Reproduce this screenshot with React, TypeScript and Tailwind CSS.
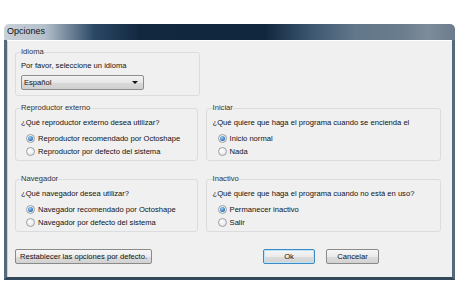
function Radio({ checked }: { checked?: boolean }) {
  return (
    <span className="flex h-[9px] w-[9px] items-center justify-center rounded-full border border-[#9aa0a6] bg-[radial-gradient(circle_at_40%_35%,#ffffff,#dcdfe3)]">
      {checked && (
        <span className="h-[5px] w-[5px] rounded-full bg-[radial-gradient(circle_at_40%_35%,#9fd0f5,#2a6db5_70%)]" />
      )}
    </span>
  );
}

function Option({ label, checked }: { label: string; checked?: boolean }) {
  return (
    <div className="flex h-[13px] items-center gap-[3px] pl-[5px]">
      <Radio checked={checked} />
      <span>{label}</span>
    </div>
  );
}

function Group({
  title,
  question,
  options,
  className,
}: {
  title: string;
  question: string;
  options: string[];
  className?: string;
}) {
  return (
    <fieldset
      className={
        "rounded-[3px] border border-[#dadde0] px-[5px] pb-[2px] " + (className ?? "")
      }
    >
      <legend className="px-0 leading-[10px] text-[#333]">{title}</legend>
      <div className="mt-[5px] h-[10px] leading-[10px]">{question}</div>
      <div className="mt-[4px] flex flex-col">
        {options.map((o, i) => (
          <Option key={o} label={o} checked={i === 0} />
        ))}
      </div>
    </fieldset>
  );
}

function Button({ children, primary, className }: { children: string; primary?: boolean; className?: string }) {
  return (
    <button
      className={
        "flex h-[15px] items-center justify-center rounded-[2px] border bg-[linear-gradient(180deg,#f6f6f6_0%,#ebebeb_50%,#dddddd_51%,#d2d2d2_100%)] leading-none text-[#111] " +
        (primary ? "border-[#3c8ac4] shadow-[inset_0_0_0_1px_#bfe3fa] " : "border-[#8a8a8a] ") +
        (className ?? "")
      }
    >
      {children}
    </button>
  );
}

export default function App() {
  return (
    <div className="h-[306px] w-[460px] bg-white pl-[4px] pt-[24px] font-['Liberation_Sans',Arial,sans-serif] text-[7.6px] text-[#111]">
      <div className="flex w-[451px] flex-col">
        <div className="flex h-[16px] items-center rounded-t-[5px] bg-[linear-gradient(90deg,#c9d1d9_0%,#b5c0cb_9%,#2a4866_20%,#12283f_30%,#11273e_58%,#3c5670_68%,#62778a_78%,#6a7c8d_88%,#7c8c9a_94%,#6b7c8c_100%)] pl-[3px] text-[9px] text-[#111]">
          Opciones
        </div>
        <div className="flex h-[240px] flex-col border-x-[3px] border-b-[3px] border-x-[#566a7d] border-b-[#34485c] bg-[#f0f0f0] pl-[8px] pr-[11px] shadow-[inset_0_1px_0_#ffffff,inset_1px_0_0_#c9d2da]">
          <fieldset className="mt-[7px] w-[185px] rounded-[3px] border border-[#dadde0] px-[5px] pb-[5px]">
            <legend className="px-0 leading-[10px] text-[#333]">Idioma</legend>
            <div className="mt-[4px] h-[10px] leading-[10px]">Por favor, seleccione un idioma</div>
            <div className="mt-[4px] flex h-[15px] w-[123px] items-center justify-between rounded-[2px] border border-[#8e8e8e] bg-[linear-gradient(180deg,#f2f2f2_0%,#e6e6e6_50%,#d9d9d9_51%,#d0d0d0_100%)] pl-[2px] pr-[5px]">
              <span>Español</span>
              <span className="h-0 w-0 border-x-[3px] border-t-[3px] border-x-transparent border-t-[#111]" />
            </div>
          </fieldset>

          <div className="mt-[7px] flex gap-[8px]">
            <Group
              className="w-[183px]"
              title="Reproductor externo"
              question="¿Qué reproductor externo desea utilizar?"
              options={["Reproductor recomendado por Octoshape", "Reproductor por defecto del sistema"]}
            />
            <Group
              className="w-[236px] pl-[6px]"
              title="Iniciar"
              question="¿Qué quiere que haga el programa cuando se encienda el"
              options={["Inicio normal", "Nada"]}
            />
          </div>

          <div className="mt-[13px] flex gap-[8px]">
            <Group
              className="w-[183px]"
              title="Navegador"
              question="¿Qué navegador desea utilizar?"
              options={["Navegador recomendado por Octoshape", "Navegador por defecto del sistema"]}
            />
            <Group
              className="w-[236px] pl-[6px]"
              title="Inactivo"
              question="¿Qué quiere que haga el programa cuando no está en uso?"
              options={["Permanecer inactivo", "Salir"]}
            />
          </div>

          <div className="mt-[17px] flex items-center">
            <Button className="w-[137px]">Restablecer las opciones por defecto.</Button>
            <Button primary className="ml-[111px] w-[52px]">Ok</Button>
            <Button className="ml-[11px] w-[53px]">Cancelar</Button>
          </div>
        </div>
      </div>
    </div>
  );
}
